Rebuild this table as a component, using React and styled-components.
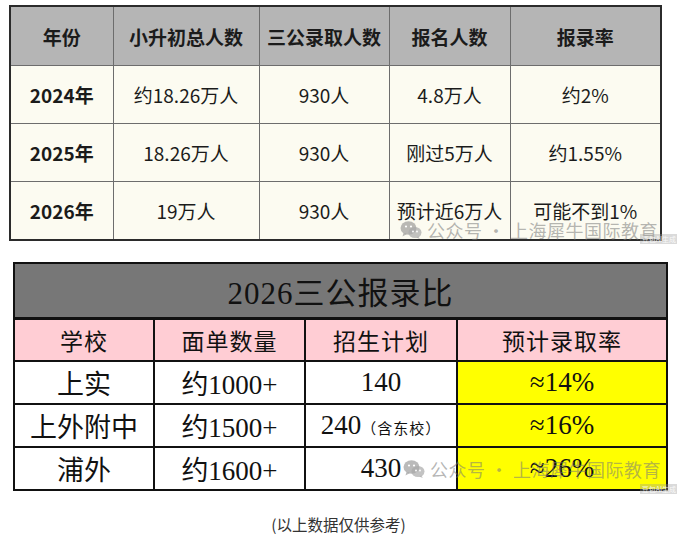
import React from "react";
import styled, { createGlobalStyle } from "styled-components";

const GlobalStyle = createGlobalStyle`
  body {
    margin: 0;
    background: #ffffff;
    font-family: "Noto Sans CJK SC", "Noto Sans", sans-serif;
  }
`;

const Page = styled.div`
  width: 677px;
  height: 546px;
  padding: 5px 0 0 9px;
  box-sizing: border-box;
  display: flex;
  flex-direction: column;
`;

const Figure = styled.div`
  position: relative;
  width: ${(p) => p.width}px;
  margin-left: ${(p) => p.offset || 0}px;
`;

// ---------- table one: sans, grey header ----------
const SansTable = styled.table`
  width: 651px;
  border-collapse: collapse;
  table-layout: fixed;
  border: 2px solid #2b2b2b;
  background: #fcfbf1;
  color: #1b1b1b;
`;

const SansHead = styled.th`
  height: 58px;
  padding: 0;
  background: #b5b5b5;
  border: 1px solid #6d6d6d;
  font-size: 19px;
  font-weight: 700;
  text-align: center;
`;

const SansCell = styled.td`
  height: 57px;
  padding: 0;
  border: 1px solid #6d6d6d;
  font-size: 19px;
  font-weight: ${(p) => (p.bold ? 700 : 400)};
  text-align: center;
  white-space: nowrap;
`;

// ---------- table two: serif, pink header ----------
const SerifTable = styled.table`
  width: 653px;
  border-collapse: collapse;
  table-layout: fixed;
  border: 2px solid #111;
  background: #ffffff;
  color: #111;
  font-family: "Liberation Serif", "Noto Sans CJK SC", serif;
`;

const TitleCell = styled.th`
  height: 53px;
  padding: 0;
  background: #777777;
  border: 2px solid #111;
  border-bottom-width: 3px;
  font-size: 31px;
  font-weight: 400;
  letter-spacing: 1px;
  text-align: center;
`;

const SerifHead = styled.th`
  height: 40px;
  padding: 0;
  background: #ffcdd4;
  border: 2px solid #111;
  font-size: 23px;
  font-weight: 400;
  letter-spacing: 1px;
  text-align: center;
`;

const SerifCell = styled.td`
  height: 41px;
  padding: 0;
  background: ${(p) => (p.hot ? "#ffff00" : "#ffffff")};
  border: 2px solid #111;
  font-size: 27px;
  text-align: center;
  white-space: nowrap;
`;

const Note = styled.span`
  font-size: 15px;
  letter-spacing: 1px;
`;

// ---------- overlays ----------
const Watermark = styled.div`
  position: absolute;
  left: ${(p) => p.left}px;
  top: ${(p) => p.top}px;
  display: flex;
  align-items: center;
  gap: 5px;
  color: rgba(120, 120, 120, 0.55);
  font-family: "Noto Sans CJK SC", sans-serif;
  font-size: 18px;
  letter-spacing: 0.5px;
  white-space: nowrap;
  pointer-events: none;
`;

const AiBadge = styled.div`
  position: absolute;
  right: ${(p) => p.right}px;
  bottom: ${(p) => p.bottom}px;
  padding: 0 2px;
  background: rgba(150, 150, 150, 0.35);
  color: rgba(255, 255, 255, 0.85);
  font-size: 7px;
  line-height: 10px;
  white-space: nowrap;
`;

const Caption = styled.p`
  margin: 22px 0 0;
  padding-right: 9px;
  text-align: center;
  font-size: 15.5px;
  color: #333;
`;

const WeChat = () => (
  <svg width="22" height="20" viewBox="0 0 22 20">
    <ellipse cx="8.5" cy="8" rx="8" ry="6.8" fill="rgba(140,140,140,0.6)" />
    <path d="M3.5 13 L2.5 16.5 L7 14" fill="rgba(140,140,140,0.6)" />
    <ellipse cx="15" cy="12.5" rx="6.5" ry="5.5" fill="rgba(170,170,170,0.7)" />
    <path d="M18.5 16.5 L19.8 19 L16 17.5" fill="rgba(170,170,170,0.7)" />
    <circle cx="6" cy="6.5" r="1.1" fill="#fff" />
    <circle cx="11" cy="6.5" r="1.1" fill="#fff" />
    <circle cx="13" cy="11.5" r="0.9" fill="#fff" />
    <circle cx="17" cy="11.5" r="0.9" fill="#fff" />
  </svg>
);

const yearRows = [
  ["2024年", "约18.26万人", "930人", "4.8万人", "约2%"],
  ["2025年", "18.26万人", "930人", "刚过5万人", "约1.55%"],
  ["2026年", "19万人", "930人", "预计近6万人", "可能不到1%"],
];

const schoolRows = [
  ["上实", "约1000+", "140", null, "≈14%"],
  ["上外附中", "约1500+", "240", "（含东校）", "≈16%"],
  ["浦外", "约1600+", "430", null, "≈26%"],
];

export default function App() {
  return (
    <Page>
      <GlobalStyle />

      <Figure width={651}>
        <SansTable>
          <colgroup>
            <col style={{ width: 103 }} />
            <col style={{ width: 146 }} />
            <col style={{ width: 130 }} />
            <col style={{ width: 121 }} />
            <col style={{ width: 151 }} />
          </colgroup>
          <thead>
            <tr>
              <SansHead>年份</SansHead>
              <SansHead>小升初总人数</SansHead>
              <SansHead>三公录取人数</SansHead>
              <SansHead>报名人数</SansHead>
              <SansHead>报录率</SansHead>
            </tr>
          </thead>
          <tbody>
            {yearRows.map((row) => (
              <tr key={row[0]}>
                {row.map((v, i) => (
                  <SansCell key={i} bold={i === 0}>
                    {v}
                  </SansCell>
                ))}
              </tr>
            ))}
          </tbody>
        </SansTable>
        <Watermark left={391} top={212}>
          <WeChat />
          <span>公众号 · 上海犀牛国际教育</span>
        </Watermark>
        <AiBadge right={-18} bottom={-3}>豆包AI生成</AiBadge>
      </Figure>

      <Figure width={653} offset={4} style={{ marginTop: 21 }}>
        <SerifTable>
          <colgroup>
            <col style={{ width: 140 }} />
            <col style={{ width: 151 }} />
            <col style={{ width: 152 }} />
            <col style={{ width: 210 }} />
          </colgroup>
          <thead>
            <tr>
              <TitleCell colSpan={4}>2026三公报录比</TitleCell>
            </tr>
            <tr>
              <SerifHead>学校</SerifHead>
              <SerifHead>面单数量</SerifHead>
              <SerifHead>招生计划</SerifHead>
              <SerifHead>预计录取率</SerifHead>
            </tr>
          </thead>
          <tbody>
            {schoolRows.map(([school, apps, plan, note, rate]) => (
              <tr key={school}>
                <SerifCell>{school}</SerifCell>
                <SerifCell>{apps}</SerifCell>
                <SerifCell>
                  {plan}
                  {note && <Note>{note}</Note>}
                </SerifCell>
                <SerifCell hot>{rate}</SerifCell>
              </tr>
            ))}
          </tbody>
        </SerifTable>
        <Watermark left={390} top={194}>
          <WeChat />
          <span>公众号 · 上海犀牛国际教育</span>
        </Watermark>
        <AiBadge right={-12} bottom={-3}>豆包AI生成</AiBadge>
      </Figure>

      <Caption>(以上数据仅供参考)</Caption>
    </Page>
  );
}
